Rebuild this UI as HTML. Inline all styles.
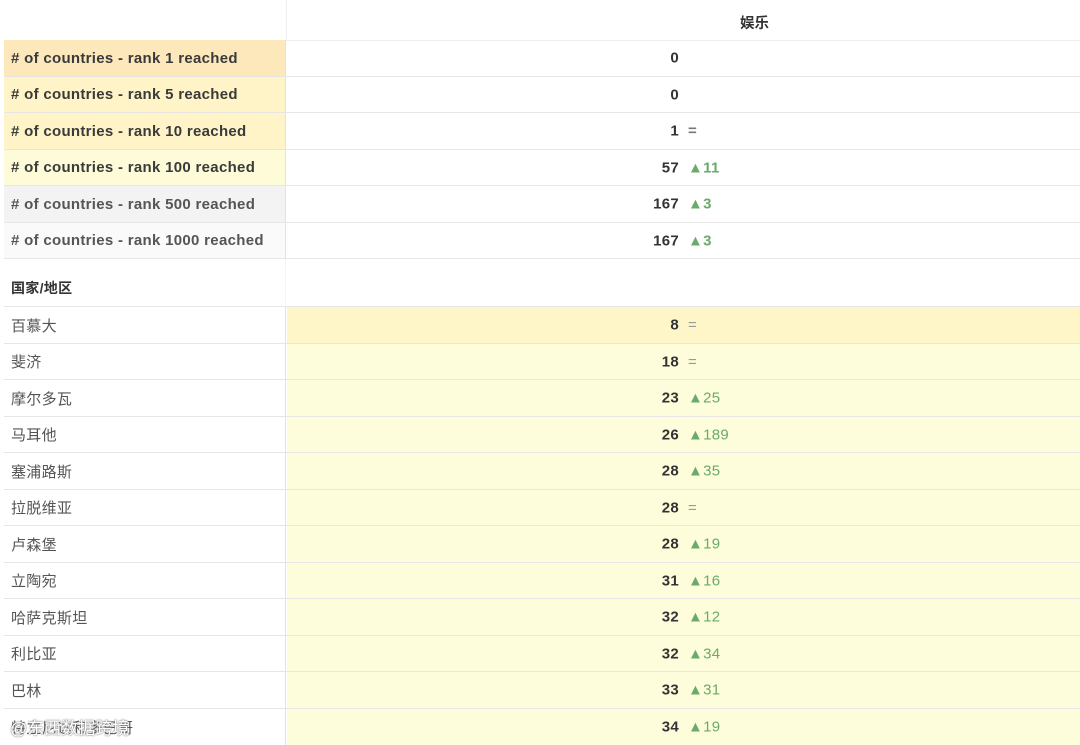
<!DOCTYPE html>
<html><head><meta charset="utf-8"><style>
html,body{margin:0;padding:0;background:#fff;width:1080px;height:745px;overflow:hidden;font-family:"Liberation Sans","Noto Sans CJK SC",sans-serif;}
.r{position:absolute;left:4px;width:1076px;border-bottom:1px solid #e6e6e6;box-sizing:border-box;}
.l{position:absolute;left:0;top:0;bottom:0;width:282px;border-right:1px solid #e2e2e2;box-sizing:border-box;padding-left:7px;display:flex;align-items:center;font-size:15px;letter-spacing:.3px;}
.v{position:absolute;left:283px;right:0;top:0;bottom:0;}
.n{position:absolute;right:401px;top:50%;transform:translateY(-50%);font-weight:bold;font-size:15px;letter-spacing:.3px;color:#333;}
.c{position:absolute;left:401px;top:50%;transform:translateY(-50%);font-size:15px;letter-spacing:.3px;}
.b .l{font-weight:bold;color:#3a3a3a;}
.g{color:#6aaa6a;}
.up .c{font-weight:bold;}
.eq{color:#999;}
.k .l{color:#555;}
</style></head><body>
<div style="position:absolute;left:286px;top:0;height:40px;border-left:1px solid #eee"></div>
<div style="position:absolute;left:740px;top:12px;font-size:14.5px;font-weight:bold;color:#333">娱乐</div>
<div class="r" style="top:40px;height:37px;border-top:1px solid #eee"></div>

<div class="r b up" style="top:40px;height:37px"><div class="l" style="background:#fde8bc">#&nbsp;of countries - rank 1 reached</div><div class="v"><span class="n">0</span></div></div>
<div class="r b up" style="top:77px;height:36px"><div class="l" style="background:#fef4c8">#&nbsp;of countries - rank 5 reached</div><div class="v"><span class="n">0</span></div></div>
<div class="r b up" style="top:113px;height:37px"><div class="l" style="background:#fef4c8">#&nbsp;of countries - rank 10 reached</div><div class="v"><span class="n">1</span><span class="c eq" style="color:#777">=</span></div></div>
<div class="r b up" style="top:150px;height:36px"><div class="l" style="background:#fefcd8">#&nbsp;of countries - rank 100 reached</div><div class="v"><span class="n">57</span><span class="c g">▲11</span></div></div>
<div class="r b up" style="top:186px;height:37px"><div class="l" style="background:#f3f3f3;color:#555">#&nbsp;of countries - rank 500 reached</div><div class="v"><span class="n">167</span><span class="c g">▲3</span></div></div>
<div class="r b up" style="top:223px;height:36px"><div class="l" style="background:#fafafa;color:#555">#&nbsp;of countries - rank 1000 reached</div><div class="v"><span class="n">167</span><span class="c g">▲3</span></div></div>

<div class="r" style="top:259px;height:48px"><div class="l" style="border-right-color:#f4f4f4;font-weight:bold;color:#333;font-size:14px;padding-top:10px">国家/地区</div></div>

<div class="r k" style="top:307px;height:37px"><div class="l">百慕大</div><div class="v" style="background:#fef5c9"><span class="n">8</span><span class="c eq">=</span></div></div>
<div class="r k" style="top:344px;height:36px"><div class="l">斐济</div><div class="v" style="background:#fefddb"><span class="n">18</span><span class="c eq">=</span></div></div>
<div class="r k" style="top:380px;height:37px"><div class="l">摩尔多瓦</div><div class="v" style="background:#fefddb"><span class="n">23</span><span class="c g">▲25</span></div></div>
<div class="r k" style="top:417px;height:36px"><div class="l">马耳他</div><div class="v" style="background:#fefddb"><span class="n">26</span><span class="c g">▲189</span></div></div>
<div class="r k" style="top:453px;height:37px"><div class="l">塞浦路斯</div><div class="v" style="background:#fefddb"><span class="n">28</span><span class="c g">▲35</span></div></div>
<div class="r k" style="top:490px;height:36px"><div class="l">拉脱维亚</div><div class="v" style="background:#fefddb"><span class="n">28</span><span class="c eq">=</span></div></div>
<div class="r k" style="top:526px;height:37px"><div class="l">卢森堡</div><div class="v" style="background:#fefddb"><span class="n">28</span><span class="c g">▲19</span></div></div>
<div class="r k" style="top:563px;height:36px"><div class="l">立陶宛</div><div class="v" style="background:#fefddb"><span class="n">31</span><span class="c g">▲16</span></div></div>
<div class="r k" style="top:599px;height:37px"><div class="l">哈萨克斯坦</div><div class="v" style="background:#fefddb"><span class="n">32</span><span class="c g">▲12</span></div></div>
<div class="r k" style="top:636px;height:36px"><div class="l">利比亚</div><div class="v" style="background:#fefddb"><span class="n">32</span><span class="c g">▲34</span></div></div>
<div class="r k" style="top:672px;height:37px"><div class="l">巴林</div><div class="v" style="background:#fefddb"><span class="n">33</span><span class="c g">▲31</span></div></div>
<div class="r k" style="top:709px;height:36px;border-bottom:none"><div class="l">特立尼达和多巴哥</div><div class="v" style="background:#fefddb"><span class="n">34</span><span class="c g">▲19</span></div></div>
<div style="position:absolute;left:10px;top:714px;font-size:17px;color:#fff;text-shadow:0 0 2px #888,0 0 1px #666;">@东西数据跨境</div>
</body></html>
